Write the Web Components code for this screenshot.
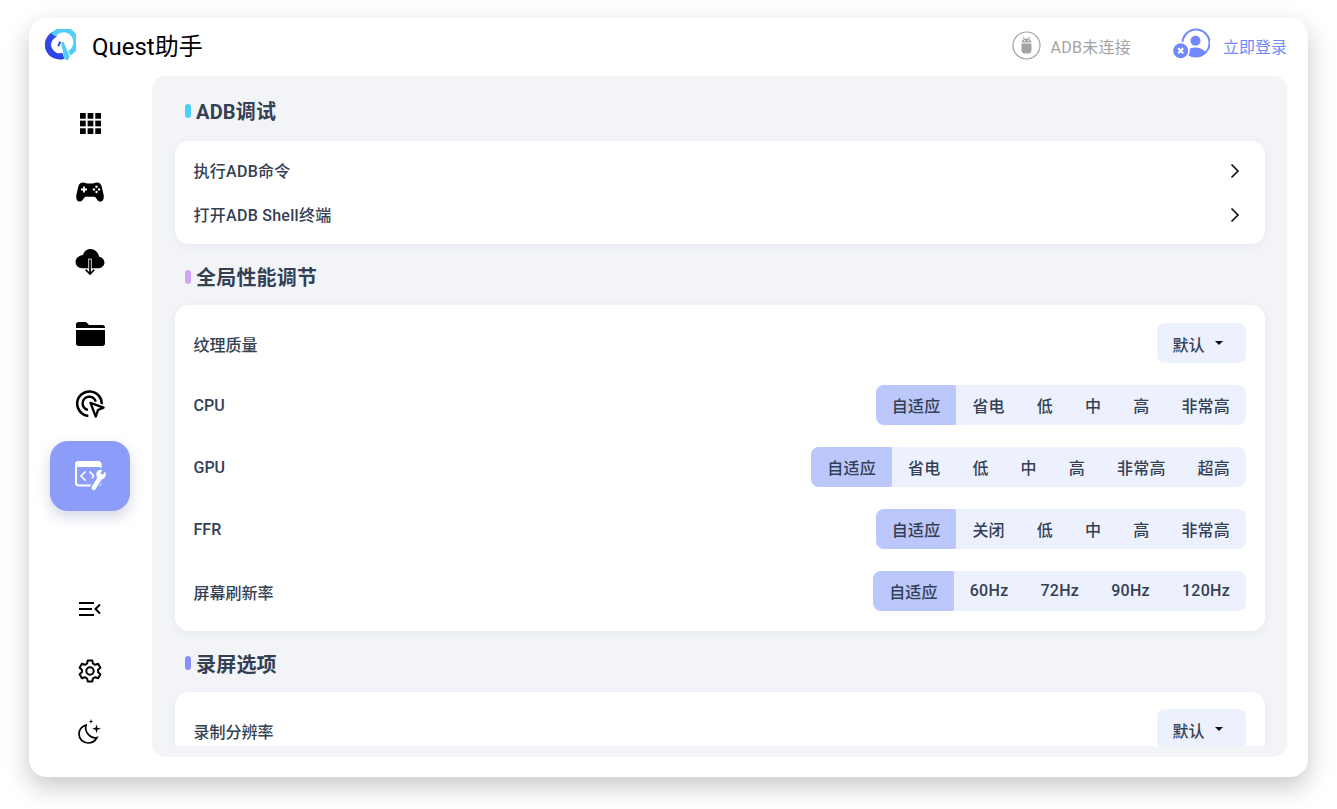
<!DOCTYPE html>
<html>
<head>
<meta charset="utf-8">
<style>
  html{background:#fff;height:100%;}
  body{margin:0;height:100%;box-sizing:border-box;padding:18px 0 0 29px;font-family:Roboto,"Noto Sans CJK SC",sans-serif;}
  .cjk,.lat{display:block}
</style>
</head>
<body>
<quest-app></quest-app>
<script>
const icons = {
  apps: `<svg width="21" height="21" viewBox="0 0 22 22" fill="#000"><rect x="0" y="0" width="6" height="6"/><rect x="8" y="0" width="6" height="6"/><rect x="16" y="0" width="6" height="6"/><rect x="0" y="8" width="6" height="6"/><rect x="8" y="8" width="6" height="6"/><rect x="16" y="8" width="6" height="6"/><rect x="0" y="16" width="6" height="6"/><rect x="8" y="16" width="6" height="6"/><rect x="16" y="16" width="6" height="6"/></svg>`,
  game: `<svg width="28" height="20" viewBox="0 0 28 20"><path fill="#000" d="M7.5 .5C4.5 .5 3 2 2.3 4.5L.4 12.8C-.3 16.3 1 19.6 3.4 19.6c2 0 3.2-1.5 4.5-3.4.7-1 1.4-1.4 2.4-1.4h7.4c1 0 1.7.4 2.4 1.4 1.3 1.9 2.5 3.4 4.5 3.4 2.4 0 3.7-3.3 3-6.8L25.7 4.5C25 2 23.5 .5 20.5 .5c-1.5 0-2.5.9-3.5.9h-6C10 1.4 9 .5 7.5 .5z"/><path stroke="#fff" stroke-width="1.8" d="M5 7.5h6M8 4.5v6"/><g fill="#fff"><circle cx="20.5" cy="4.8" r="1.2"/><circle cx="20.5" cy="10" r="1.2"/><circle cx="17.9" cy="7.4" r="1.2"/><circle cx="23.1" cy="7.4" r="1.2"/></g></svg>`,
  cloud: `<svg width="30" height="27" viewBox="0 0 30 28"><path fill="#000" d="M15.5 0C11.5 0 8.6 2.6 7.8 6.3 3.4 6.8 0 9.7 0 13.6c0 3.9 3.2 6.4 7 6.4h16.5c3.6 0 6.5-2.6 6.5-6 0-3.2-2.4-5.6-5.5-6C23.6 3.4 20 0 15.5 0z"/><path fill="none" stroke="#fff" stroke-width="3.5" d="M15 10v10"/><path fill="none" stroke="#000" stroke-width="1.8" d="M15 11v15M10.5 21.5l4.5 4.5 4.5-4.5"/></svg>`,
  folder: `<svg width="29" height="24" viewBox="0 0 29 24"><path fill="#000" d="M2.5 0h6.2c1.2 0 2 .5 2.7 1.300L13 3h13.500C28 3 29 4 29 5.500V6H0V2.500C0 1 1 0 2.500 0z"/><path fill="#000" d="M0 8h29v13.500c0 1.500-1 2.500-2.500 2.500h-24C1 24 0 23 0 21.500z"/></svg>`,
  target: `<svg width="31" height="29" viewBox="0 0 32 30" fill="none"><path stroke="#000" stroke-width="2.6" d="M13.8 26.8A12.7 12.7 0 1 1 27.6 14.6"/><path stroke="#000" stroke-width="2.6" d="M13.3 20.6A6.9 6.9 0 1 1 21.4 12"/><path stroke="#000" stroke-width="2.4" stroke-linejoin="round" d="M16 13.3l13.5 5-5.8 2.4-2.3 6.8z" fill="#fff"/></svg>`,
  tool: `<svg style="margin-left:2px" width="32" height="30" viewBox="0 0 32 30" fill="none"><rect x="1" y="1" width="24.5" height="23.5" rx="3" stroke="#fff" stroke-width="2"/><path fill="#fff" d="M3.5 0h19.5c1.800 0 3.500 1.500 3.500 3.500V6H0V3.500C0 1.500 1.500 0 3.500 0z"/><path stroke="#fff" stroke-width="1.7" d="M10.500 10.500l-4.500 4.500 4.500 4.500M14.500 10.500l4.500 4.500-2 2"/><path stroke="#8b9df8" stroke-width="7.5" stroke-linecap="round" d="M19 26.500L25.500 16"/><circle cx="26" cy="13.500" r="7" fill="#8b9df8"/><path stroke="#fff" stroke-width="4.5" stroke-linecap="round" d="M18.800 26.800L25.500 16"/><circle cx="26" cy="13.500" r="4.800" fill="#fff"/><path stroke="#8b9df8" stroke-width="3" d="M26.500 13L30 8"/></svg>`,
  collapse: `<svg width="22" height="14" viewBox="0 0 22 14" fill="none" stroke="#000" stroke-width="2"><path d="M0 1h15M0 7h13M0 13h15M21 2.500L16.500 7l4.500 4.500"/></svg>`,
  gear: `<svg width="24" height="24" viewBox="0 0 24 24" fill="none" stroke="#000" stroke-width="2" stroke-linejoin="round"><path d="M9.700 1.500h4.600l.6 3 2.300 1.300 2.900-1 2.300 4-2.300 2v2.400l2.300 2-2.300 4-2.900-1-2.300 1.300-.6 3H9.700l-.6-3-2.300-1.300-2.900 1-2.300-4 2.300-2v-2.400l-2.300-2 2.300-4 2.900 1 2.300-1.300z"/><circle cx="12" cy="12" r="3.7"/></svg>`,
  moon: `<svg style="margin-bottom:3px" width="24" height="25" viewBox="0 0 24 25"><path fill="none" stroke="#000" stroke-width="1.7" d="M8 6C3.800 7.500 1 10.800 1 15c0 5.200 4.200 9 9 9 3.900 0 7.200-2 9-5.500-6.300 1.600-12.800-5-11-12.500z"/><path fill="#000" d="M18.500 5.500l1 3.300 3.500 1-3.500 1-1 3.400-1-3.400-3.500-1 3.500-1zM13 0l.6 1.900 1.900.6-1.900.6L13 5l-.6-1.900-1.900-.6 1.900-.6z"/></svg>`
}

class AppLogo extends HTMLElement {
  constructor(){
    super()
    this.attachShadow({mode:"open"}).innerHTML = `
    <style>:host{display:block;width:32px;height:33px;margin-bottom:3px}</style>
    <svg width="31" height="33" viewBox="0 0 32 33" fill="none">
      <path stroke="#2f46e6" stroke-width="6.5" d="M11 4.500A11.800 11.800 0 0 0 19 27"/>
      <path fill="#2f46e6" d="M14.800 12.200l1.800.8-2 4.700-1.800-1z"/>
      <path stroke="#4fcdfb" stroke-width="5.2" d="M8.600 5.800A12.800 12.800 0 1 1 25 24.500"/>
      <path fill="#4fcdfb" d="M16.500 13.500l2.700-1 6.300 15.500-2.200 4-3.200-1.500z"/>
    </svg>`
  }
}
customElements.define("app-logo", AppLogo)

class AppHeader extends HTMLElement {
  constructor(){
    super()
    this.attachShadow({mode:"open"}).innerHTML = `
    <style>
      :host{display:flex;align-items:center;height:58px;padding:0 21px 0 16px;box-sizing:border-box;}
      .title{font-size:24px;color:#000;margin-left:15px;flex:1;line-height:58px}
      .adb{display:flex;align-items:center;font-size:16px;color:#a3a3a3;margin-right:42px;letter-spacing:.25px}
      .adb svg{margin:0 10px 3px 0}
      .adb span,.login span{padding-bottom:2px}
      .login{display:flex;align-items:center;font-size:16px;color:#7289fd}
      .login svg{margin:0 13px 7px 0}
    </style>
    <app-logo></app-logo>
    <div class="title">Quest助手</div>
    <div class="adb">
      <svg width="29" height="29" viewBox="0 0 29 29"><circle cx="14.5" cy="14.5" r="13.5" fill="none" stroke="#a3a3a3" stroke-width="1.2"/><path fill="#a3a3a3" d="M9.5 12.5h10V19a3.500 3.500 0 0 1-3.500 3.500h-3A3.500 3.500 0 0 1 9.500 19zM9.500 11.500c0-2.300 2-4 5-4s5 1.700 5 4z"/><path stroke="#a3a3a3" d="M11 5.800l1.300 2.200M18 5.800l-1.300 2.200"/><circle cx="12.5" cy="9.8" r=".7" fill="#fff"/><circle cx="16.5" cy="9.8" r=".7" fill="#fff"/></svg>
      <span>ADB未连接</span>
    </div>
    <div class="login">
      <svg width="37" height="31" viewBox="0 0 37 31"><circle cx="23" cy="15" r="13.5" fill="none" stroke="#7289fd" stroke-width="2"/><circle cx="22.5" cy="12.7" r="5" fill="#7289fd"/><path fill="#7289fd" d="M12.500 24c2.500-3 6-4.500 10-4.500s7.500 1.500 10 4.500c-2.500 3-6 4.500-10 4.500s-7.500-1.500-10-4.500z"/><circle cx="7.7" cy="22.7" r="9.2" fill="#fff"/><circle cx="7.7" cy="22.7" r="7.5" fill="#7289fd"/><path stroke="#fff" stroke-width="2" d="M5.200 20.200l5 5M10.200 20.200l-5 5"/></svg>
      <span>立即登录</span>
    </div>`
  }
}
customElements.define("app-header", AppHeader)

class NavItem extends HTMLElement {
  constructor(){
    super()
    this.attachShadow({mode:"open"}).innerHTML = `
    <style>
      :host{display:flex;align-items:center;justify-content:center;width:80px;height:70px;border-radius:18px;}
      :host([active]){background:#8b9df8;box-shadow:0 6px 14px rgba(100,110,170,.28)}
      ::slotted(svg){display:block}
    </style>
    <slot></slot>`
  }
}
customElements.define("nav-item", NavItem)

class SideNav extends HTMLElement {
  constructor(){
    super()
    this.attachShadow({mode:"open"}).innerHTML = `
    <style>
      :host{display:flex;flex-direction:column;width:123px;box-sizing:border-box;padding:14.25px 0 13px 21px;height:701px}
      .top{display:flex;flex-direction:column;gap:1px}
      .top nav-item:first-child{height:65.5px}
      .bottom{display:flex;flex-direction:column;margin-top:auto}
      .bottom nav-item{height:62px}
    </style>
    <div class="top">
      <nav-item>${icons.apps}</nav-item>
      <nav-item>${icons.game}</nav-item>
      <nav-item>${icons.cloud}</nav-item>
      <nav-item>${icons.folder}</nav-item>
      <nav-item>${icons.target}</nav-item>
      <nav-item active>${icons.tool}</nav-item>
    </div>
    <div class="bottom">
      <nav-item>${icons.collapse}</nav-item>
      <nav-item>${icons.gear}</nav-item>
      <nav-item>${icons.moon}</nav-item>
    </div>`
  }
}
customElements.define("side-nav", SideNav)

class SectionTitle extends HTMLElement {
  constructor(){
    super()
    this.attachShadow({mode:"open"}).innerHTML = `
    <style>
      :host{display:flex;align-items:center;height:65px;padding:4px 0 0 10px;font-size:20px;font-weight:700;color:#344054;box-sizing:border-box;letter-spacing:.2px}
      .bar{width:6px;height:14px;border-radius:3px;background:var(--bar,#4fcdfb);margin-right:5px}
    </style>
    <span class="bar"></span><slot></slot>`
  }
}
customElements.define("section-title", SectionTitle)

class SetCard extends HTMLElement {
  constructor(){
    super()
    this.attachShadow({mode:"open"}).innerHTML = `
    <style>
      :host{display:flex;flex-direction:column;background:#fff;border-radius:14px;box-shadow:0 2px 8px rgba(90,100,130,.08);padding:var(--pad,18px 19px 20px 18.5px);gap:var(--gap,22.5px)}
    </style>
    <slot></slot>`
  }
}
customElements.define("set-card", SetCard)

class LinkRow extends HTMLElement {
  constructor(){
    super()
    this.attachShadow({mode:"open"}).innerHTML = `
    <style>
      :host{display:flex;align-items:center;justify-content:space-between;height:44px;box-sizing:border-box;padding-bottom:2px;font-size:16px;font-weight:500;color:#344054;letter-spacing:.27px}
      svg{display:block;margin:2px 6px 0 0}
    </style>
    <slot></slot>
    <svg width="10" height="16" viewBox="0 0 10 16" fill="none" stroke="#111" stroke-width="1.7"><path d="M1.500 1.500L8 8l-6.500 6.500"/></svg>`
  }
}
customElements.define("link-row", LinkRow)

class SetRow extends HTMLElement {
  constructor(){
    super()
    this.attachShadow({mode:"open"}).innerHTML = `
    <style>
      :host{display:flex;align-items:center;justify-content:space-between;height:39.5px;font-size:16px;font-weight:500;color:#344054}
      ::slotted(.cjk){padding-top:3px}
      ::slotted(.lat){padding-top:1.5px}
    </style>
    <slot></slot>`
  }
}
customElements.define("set-row", SetRow)

class SegGroup extends HTMLElement {
  connectedCallback(){
    if(this.shadowRoot) return
    const opts = this.getAttribute("options").split(",")
    this.attachShadow({mode:"open"}).innerHTML = `
    <style>
      :host{display:flex;background:#edf1fd;border-radius:8px;height:39.5px;overflow:hidden;font-size:16px;font-weight:500;color:#344054;letter-spacing:.2px}
      div{display:flex;align-items:center;padding:0 16px;white-space:nowrap}
      .on{background:#bcc7fb;border-radius:0 2px 2px 0}
      .hz{letter-spacing:.28px}
    </style>
    ${opts.map((o,i)=>`<div class="${i==0?'on':''} ${o.endsWith('Hz')?'hz':''}">${o}</div>`).join("")}`
  }
}
customElements.define("seg-group", SegGroup)

class SelectBox extends HTMLElement {
  constructor(){
    super()
    this.attachShadow({mode:"open"}).innerHTML = `
    <style>
      :host{display:flex;align-items:center;height:40px;width:89.5px;box-sizing:border-box;padding:2px 0 0 16px;background:#edf1fd;border-radius:8px;font-size:16px;font-weight:500;color:#344054}
      i{width:0;height:0;border:4.5px solid transparent;border-top:4px solid #111;border-bottom:0;margin:0 0 2px 10px}
    </style>
    <slot></slot><i></i>`
  }
}
customElements.define("select-box", SelectBox)

class QuestApp extends HTMLElement {
  constructor(){
    super()
    this.attachShadow({mode:"open"}).innerHTML = `
    <style>
      :host{display:block;width:1279px;height:759px;background:#fff;border-radius:18px;box-shadow:0 10px 26px rgba(0,0,0,.22);}
      .body{display:flex;height:701px}
      .panel{width:1135px;height:681px;background:#f2f4f8;border-radius:14px;box-sizing:border-box;padding-bottom:11px;}
      .scroll{height:670px;overflow:hidden;padding:0 22px 0 23px;}
      .second{--bar:#cfa6f7}
      .third{--bar:#8b8ffa}
      set-card.links{--pad:8px 19px 7px 18.5px;--gap:0}
    </style>
    <app-header></app-header>
    <div class="body">
      <side-nav></side-nav>
      <div class="panel">
        <div class="scroll">
          <section-title>ADB调试</section-title>
          <set-card class="links">
            <link-row>执行ADB命令</link-row>
            <link-row>打开ADB Shell终端</link-row>
          </set-card>
          <section-title class="second" style="height:61px">全局性能调节</section-title>
          <set-card>
            <set-row><span class="cjk">纹理质量</span><select-box>默认</select-box></set-row>
            <set-row><span class="lat">CPU</span><seg-group options="自适应,省电,低,中,高,非常高"></seg-group></set-row>
            <set-row><span class="lat">GPU</span><seg-group options="自适应,省电,低,中,高,非常高,超高"></seg-group></set-row>
            <set-row><span class="lat">FFR</span><seg-group options="自适应,关闭,低,中,高,非常高"></seg-group></set-row>
            <set-row><span class="cjk">屏幕刷新率</span><seg-group options="自适应,60Hz,72Hz,90Hz,120Hz"></seg-group></set-row>
          </set-card>
          <section-title class="third" style="height:61px">录屏选项</section-title>
          <set-card>
            <set-row><span class="cjk">录制分辨率</span><select-box>默认</select-box></set-row>
          </set-card>
        </div>
      </div>
    </div>`
  }
}
customElements.define("quest-app", QuestApp)
</script>
</body>
</html>
